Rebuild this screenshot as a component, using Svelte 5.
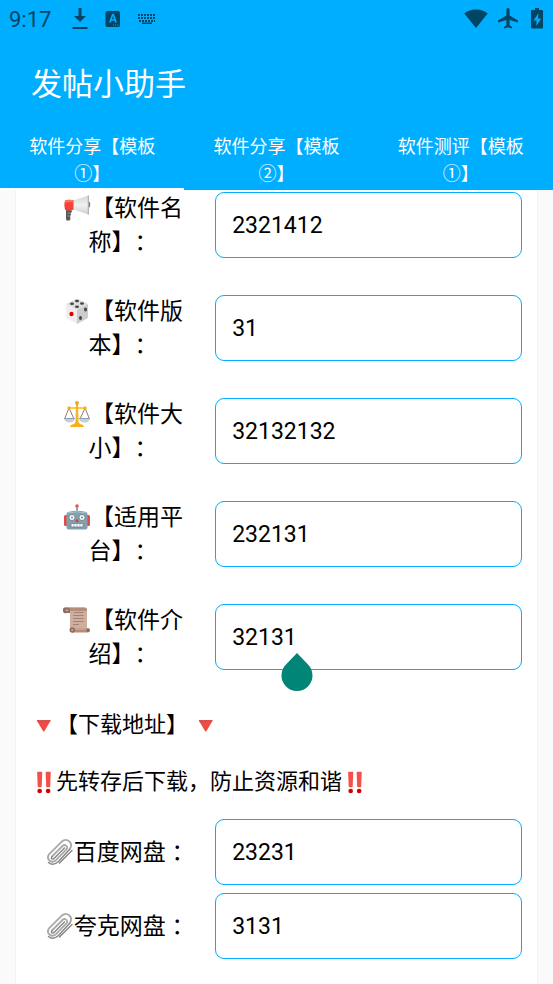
<script lang="ts">
  interface Field {
    id: string;
    icon: string;
    label: string;
    value: string;
  }

  const tabs = ['软件分享【模板①】', '软件分享【模板②】', '软件测评【模板①】'];

  let activeTab = $state(0);

  let fields: Field[] = $state([
    { id: 'name', icon: 'megaphone', label: '【软件名称】：', value: '2321412' },
    { id: 'version', icon: 'die', label: '【软件版本】：', value: '31' },
    { id: 'size', icon: 'scales', label: '【软件大小】：', value: '32132132' },
    { id: 'platform', icon: 'robot', label: '【适用平台】：', value: '232131' },
    { id: 'intro', icon: 'scroll', label: '【软件介绍】：', value: '32131' }
  ]);

  let links: Field[] = $state([
    { id: 'baidu', icon: 'clip', label: '百度网盘 ：', value: '23231' },
    { id: 'quark', icon: 'clip', label: '夸克网盘 ：', value: '3131' }
  ]);

  // field that shows the text cursor handle
  const focusedId = 'intro';
</script>

{#snippet emoji(name: string)}
  <svg class="emoji" viewBox="0 0 28 28" aria-hidden="true">
    {#if name === 'megaphone'}
      <defs>
        <linearGradient id="horn" x1="0" y1="0" x2="0" y2="1">
          <stop offset="0" stop-color="#d5d5d5" />
          <stop offset="0.5" stop-color="#f1f1f1" />
          <stop offset="1" stop-color="#cfcfcf" />
        </linearGradient>
      </defs>
      <path d="M3 15h5l1 3-1.500 1 .5 2-1 1 .5 3-1 1.500H3.500L3 25z" fill="#5a5a5a" />
      <path d="M4.500 19h3M4.500 22h3" stroke="#8d8d8d" stroke-width="1" />
      <ellipse cx="26" cy="10.500" rx="1.300" ry="3" fill="#78868d" />
      <path d="M10 6.500 25.500 1.500v19L10 15.500z" fill="url(#horn)" />
      <path d="M25.300 1.500v19" stroke="#a5a5a5" stroke-width="1" />
      <path d="M2 6.500Q6 5 10.500 6.300v9.500Q6 17.500 2 15.700 .5 11 2 6.500z" fill="#f44336" />
      <path d="M2 6.500Q6 5 10.500 6.300v2Q6 7.500 1.600 9z" fill="#ff7061" />
    {:else if name === 'die'}
      <path d="M14 1.500 25 7l-11 6L3 7z" fill="#dedede" />
      <path d="M3 7l11 6v14L4 21.500Q3 21 3 20z" fill="#eeeeee" />
      <path d="M25 7l-11 6v14l10-5.500q1-.5 1-1.500z" fill="#cccccc" />
      <g fill="#444">
        <ellipse cx="14" cy="4" rx="2" ry="1.200" />
        <ellipse cx="9" cy="6.800" rx="2" ry="1.200" />
        <ellipse cx="19" cy="6.500" rx="2" ry="1.200" />
        <ellipse cx="14" cy="9.700" rx="2" ry="1.200" />
        <ellipse cx="22.500" cy="12.500" rx="1.500" ry="2" />
        <ellipse cx="17.500" cy="21" rx="1.500" ry="2" />
      </g>
      <ellipse cx="8.500" cy="17" rx="2.100" ry="2.300" fill="#e50000" />
    {:else if name === 'scales'}
      <path d="M6 8 1.500 19M6 8l5 11M22 8l-5 11M22 8l4.500 11" stroke="#9a796e" stroke-width="1" />
      <path d="M5 8h18" stroke="#f9bd2e" stroke-width="1.600" />
      <path d="M1 18.500h11q-1 4-5.500 4T1 18.500zM16 18.500h11q-1 4-5.500 4t-5.500-4z" fill="#c6cfd3" />
      <path d="M1 18.500h11M16 18.500h11" stroke="#8fa1aa" stroke-width="1" />
      <path d="M13 4h2l.6 19h-3.200z" fill="#f5b52b" />
      <circle cx="14" cy="3" r="2" fill="#f5a81c" />
      <circle cx="6" cy="8" r="1.700" fill="#f7ae20" />
      <circle cx="22" cy="8" r="1.700" fill="#f7ae20" />
      <path d="M7 27q.5-2.500 4-3l1.500-1.500h3L17 24q3.500.5 4 3z" fill="#fbae17" />
    {:else if name === 'robot'}
      <path d="M14 3v6" stroke="#78909c" stroke-width="1.500" />
      <circle cx="14" cy="3" r="1.800" fill="#ef5350" />
      <rect x="1" y="12" width="4" height="11" rx="1.500" fill="#e24a42" />
      <rect x="23" y="12" width="4" height="11" rx="1.500" fill="#e24a42" />
      <path d="M5 9Q14 6.500 23 9q1.500.5 1.500 2v13.500q0 2-2 2h-17q-2 0-2-2V11q0-1.500 1.500-2z" fill="#82a0ad" />
      <path d="M5 10Q14 7.500 23 10" stroke="#b0c4cd" fill="none" />
      <circle cx="9" cy="14.500" r="3" fill="#fff" stroke="#5f7681" stroke-width="0.800" />
      <circle cx="19" cy="14.500" r="3" fill="#fff" stroke="#5f7681" stroke-width="0.800" />
      <circle cx="9" cy="14.500" r="1" fill="#71858f" />
      <circle cx="19" cy="14.500" r="1" fill="#71858f" />
      <path d="M14 15.500l2 3.500h-4z" fill="#e53935" />
      <rect x="8" y="20.500" width="12" height="3.500" rx="1" fill="#fff" stroke="#607580" stroke-width="0.700" />
      <path d="M11 21v3M14 21v3M17 21v3" stroke="#879aa3" stroke-width="0.700" />
    {:else if name === 'scroll'}
      <path d="M4 1.500h17.500q2.500 0 2.500 2.500v18H7V7H4z" fill="#cfae9e" />
      <path d="M4 1.500h17.500q2.500 0 2.500 2.500v1H6z" fill="#b58d7b" />
      <path d="M3.800 1.500a3 3 0 1 0 0 5.500H7V4q0-2-3.200-2.500z" fill="#8d6e63" />
      <circle cx="4" cy="4.300" r="1.200" fill="#c59d89" />
      <path d="M11 6.500h9.500M10 9.500h10.500M10 12.500h10.500M10 15.500h10.500M10 18.500h6" stroke="#a08478" stroke-width="1.100" />
      <path d="M9 22h15.500q2.500 0 2.500 2.300T24.500 26.500H9z" fill="#b58d7b" />
      <path d="M10 23h14" stroke="#d8b6a3" stroke-width="1" />
      <circle cx="9.300" cy="24" r="2.800" fill="#8d6e63" />
      <circle cx="9.300" cy="24" r="1.200" fill="#c59d89" />
      <circle cx="25" cy="24.200" r="1.700" fill="#8d6e63" />
    {:else if name === 'clip'}
      <path
        d="M6 18.500 16.500 8q2-1.800 3.800-.2T20.500 11.500L10 22.200q-3.500 3-6.500.3t-.3-6.500L15.500 3.800q4.200-3.600 7.800-.3t.4 7.700"
        fill="none"
        stroke="#a9a9a9"
        stroke-width="1.800"
        stroke-linecap="round"
      />
      <path
        d="M6 18.500q-1.300 2.300.6 2.600 1 0 2.200-1.300L18.500 10M23.700 11.200 12.500 23.500Q7 28.500 2.500 24.500M26 12.500 13.500 25"
        fill="none"
        stroke="#858585"
        stroke-width="1.400"
        stroke-linecap="round"
      />
    {:else if name === 'triangle'}
      <path d="M7 8h14.500q.8 0 .4.700L15 20.300q-.7 1-1.400 0L6.600 8.700Q6.200 8 7 8z" fill="#f04a45" />
      <path d="M7 8h14.500q.8 0 .4.700l-.5.800H7.100l-.5-.8Q6.200 8 7 8z" fill="#c94b45" />
    {:else if name === 'bangs'}
      <path d="M7.500 2h4.500q.6 0 .6.700L12 18.500q0 .8-.8.800H8.300q-.8 0-.8-.8L6.900 2.700Q6.900 2 7.500 2z" fill="#f44f4a" />
      <path d="M17 2h4.500q.6 0 .6.700l-.6 15.800q0 .8-.8.800h-2.900q-.8 0-.8-.8l-.6-15.800Q16.400 2 17 2z" fill="#f44f4a" />
      <circle cx="9.700" cy="23.500" r="2.600" fill="#d50000" />
      <circle cx="19.200" cy="23.500" r="2.600" fill="#d50000" />
    {/if}
  </svg>
{/snippet}

<div class="page">
  <header class="app-bar">
    <div class="status-bar">
      <span class="clock">9:17</span>
      <svg width="18" height="24" viewBox="0 0 18 24" aria-hidden="true">
        <path d="M7.500 1h3v8H15l-6 6-6-6h4.500z" />
        <path d="M1.500 20h15v2h-15z" />
      </svg>
      <svg width="16" height="24" viewBox="0 0 16 24" aria-hidden="true">
        <path
          fill-rule="evenodd"
          d="M2.500 4h10.500q2 0 2 1.500v13q0 1.500-2 1.500h-10.500Q.5 20 .5 18.500V5.500Q.5 4 2.500 4zM7 7 4 15.500h2l.5-1.700h3l.5 1.700h2L9 7zM8 9l1 3.300H7zM8 17.500v1h1v-1zM10.200 17.500v1h1v-1zM12.400 17.500v1h1v-1z"
        />
      </svg>
      <svg width="20" height="24" viewBox="0 0 20 24" aria-hidden="true">
        <path d="M1 8h18M1 11h18M2 14h16" fill="none" stroke="currentColor" stroke-width="2" stroke-dasharray="2 1" />
        <path d="M5 15.500h10v1.500H5z" />
      </svg>
      <span class="spacer"></span>
      <svg width="24" height="24" viewBox="0 0 24 24" aria-hidden="true">
        <path d="M12 21 .3 6.500Q5 2.500 12 2.500t11.700 4z" />
      </svg>
      <svg width="20" height="24" viewBox="0 0 20 24" aria-hidden="true">
        <path d="M10 1q1.600 0 1.600 1.800V8.500L20 13.500v2l-8.400-2.600v5.300l2.400 1.700v1.600L10 20.300l-4 1.200v-1.600l2.400-1.700v-5.300L0 15.500v-2l8.400-5V2.800Q8.400 1 10 1z" />
      </svg>
      <svg width="18" height="24" viewBox="0 0 18 24" aria-hidden="true">
        <path
          fill-rule="evenodd"
          d="M7 1h4v2h3q1 0 1 1v16.500q0 1-1 1H4q-1 0-1-1V4q0-1 1-1h3zM10.500 6 5.500 13.500h3V19l4.500-7.500h-3z"
        />
      </svg>
    </div>

    <h1>发帖小助手</h1>

    <div class="tabs" role="tablist">
      {#each tabs as tab, i}
        <button
          type="button"
          role="tab"
          class="tab"
          class:active={activeTab === i}
          aria-selected={activeTab === i}
          onclick={() => (activeTab = i)}
        >
          {tab}
        </button>
      {/each}
    </div>
  </header>

  <main class="content">
    <form class="card">
      <div class="fields">
        {#each fields as field (field.id)}
          <div class="row">
            <label for={field.id}>{@render emoji(field.icon)}{field.label}</label>
            <div class="input-wrap">
              <input id={field.id} type="text" bind:value={field.value} />
              {#if field.id === focusedId}
                <svg class="handle" viewBox="0 0 32 38" aria-hidden="true">
                  <path d="M16 0 27 11.500A15.500 15.500 0 1 1 5 11.500z" fill="#008577" />
                </svg>
              {/if}
            </div>
          </div>
        {/each}
      </div>

      <div class="notes">
        <p>{@render emoji('triangle')}【下载地址】 {@render emoji('triangle')}</p>
        <p>{@render emoji('bangs')}先转存后下载，防止资源和谐{@render emoji('bangs')}</p>
      </div>

      <div class="links">
        {#each links as link (link.id)}
          <div class="row">
            <label class="link-label" for={link.id}>{@render emoji(link.icon)}{link.label}</label>
            <div class="input-wrap">
              <input id={link.id} type="text" bind:value={link.value} />
            </div>
          </div>
        {/each}
      </div>
    </form>
  </main>
</div>

<style>
  :global(body) {
    background: #fafafa;
  }

  .page {
    display: flex;
    flex-direction: column;
    min-height: 100vh;
    font-family: Roboto, 'Noto Sans CJK SC', sans-serif;
    text-spacing-trim: space-all;
    color: #000;
  }

  .app-bar {
    background: #00aeff;
    color: #fff;
  }

  .status-bar {
    display: flex;
    align-items: center;
    gap: 10px;
    height: 38px;
    padding: 0 7px 0 9px;
    color: #004563;
  }

  .status-bar svg {
    flex: none;
    fill: currentColor;
    margin-right: 6px;
  }

  .status-bar .spacer ~ svg {
    margin-right: 0;
  }

  .clock {
    font-size: 22px;
    margin-right: 10px;
  }

  .spacer {
    flex: 1;
  }

  h1 {
    margin: 0;
    padding: 24px 31px 20px;
    font-size: 31px;
    font-weight: 400;
    line-height: 46px;
  }

  .tabs {
    display: flex;
  }

  .tab {
    flex: 1;
    padding: 5px 24px 1px;
    border: none;
    border-bottom: 2px solid transparent;
    background: none;
    color: #fff;
    font: inherit;
    font-size: 18px;
    line-height: 27px;
    text-align: center;
    cursor: pointer;
  }

  .tab.active {
    border-bottom-color: #fff;
  }

  .content {
    display: flex;
    flex: 1;
    padding: 0 15px;
  }

  .card {
    flex: 1;
    box-sizing: border-box;
    padding: 0 15px 24px;
    border: 1px solid #f2f2f2;
    border-width: 0 1px;
    background: #fff;
  }

  .fields {
    display: flex;
    flex-direction: column;
    gap: 33px;
  }

  .row {
    display: grid;
    grid-template-columns: 3fr 5fr;
    align-items: center;
  }

  label {
    padding: 2px 24px 0;
    font-size: 23px;
    line-height: 34px;
    text-align: center;
  }

  .link-label {
    padding: 2px 6px 0 0;
  }

  .emoji {
    width: 28px;
    height: 28px;
    vertical-align: -6px;
  }

  .input-wrap {
    position: relative;
  }

  input {
    display: block;
    box-sizing: border-box;
    width: 100%;
    height: 66px;
    padding: 0 16px;
    border: 1px solid #00aeff;
    border-radius: 9px;
    outline: none;
    background: #fff;
    color: #000;
    font: inherit;
    font-size: 23px;
  }

  .handle {
    position: absolute;
    top: 49px;
    left: 66px;
    width: 32px;
    height: 38px;
  }

  .notes {
    display: flex;
    flex-direction: column;
    gap: 25px;
    padding: 37px 0 21px;
  }

  .notes p {
    margin: 0;
    font-size: 22px;
    line-height: 32px;
  }

  .notes .emoji {
    width: 25px;
    height: 25px;
  }

  .links {
    display: flex;
    flex-direction: column;
    gap: 8px;
  }
</style>
